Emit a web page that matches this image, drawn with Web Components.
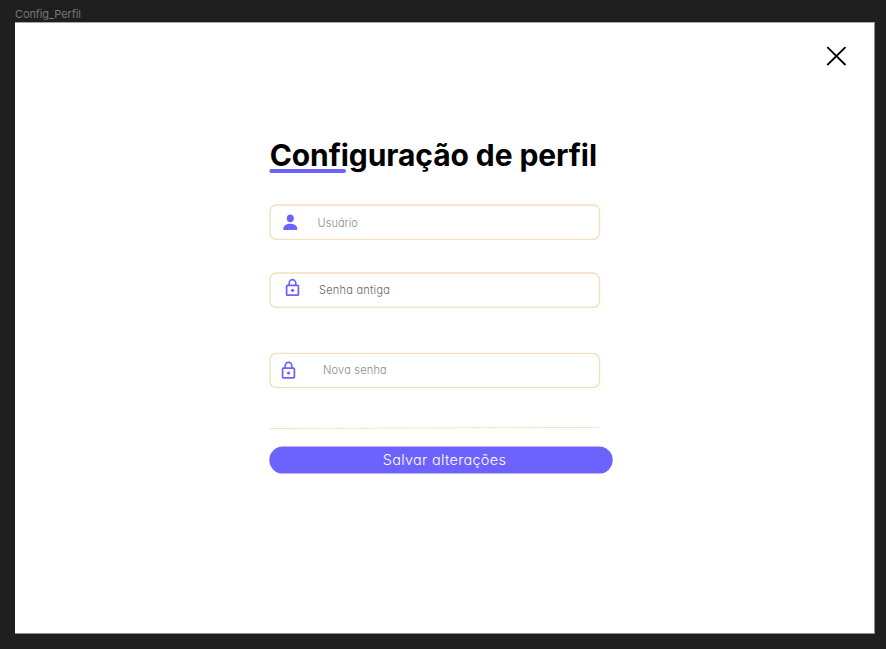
<!DOCTYPE html>
<html lang="pt-BR">
<head>
<meta charset="utf-8">
<title>Config_Perfil</title>
<style>
html,body{margin:0;height:100%;background:#1e1e1e;overflow:hidden}
</style>
</head>
<body>
<profile-frame label="Config_Perfil">
  <close-button slot="action"></close-button>
  <page-title>Configuração de perfil</page-title>
  <text-field icon="user" style="--icon-x:13px;--icon-y:.3px;--text-x:48.6px;--text-y:.5px;--ls:.03px;margin-top:26px">Usuário</text-field>
  <text-field icon="lock" style="--icon-x:14.7px;--icon-y:-2px;--text-x:50px;--ink:#666;--ls:.25px;margin-top:32px">Senha antiga</text-field>
  <text-field icon="lock" style="--icon-x:11.2px;--icon-y:.7px;--text-x:54px;--text-y:-.2px;--ls:.2px;margin-top:44px;--box-y:.3px">Nova senha</text-field>
  <rule-line></rule-line>
  <save-button>Salvar alterações</save-button>
</profile-frame>
<script>
const define = (name, html, setup) => customElements.define(name, class extends HTMLElement {
  constructor() {
    super();
    const t = document.createElement('template');
    t.innerHTML = html;
    this.attachShadow({mode: 'open'}).append(t.content.cloneNode(true));
  }
  connectedCallback() { if (setup) setup(this, this.shadowRoot); }
});

define('profile-frame', `<style>
:host{display:flex;flex-direction:column;box-sizing:border-box;height:649px;padding:0 11px 15.5px 15px;font-family:Inter,"Liberation Sans",sans-serif}
.label{height:22px;box-sizing:border-box;padding-top:7px;font-size:11px;line-height:14px;letter-spacing:-.1px;color:#777}
.canvas{flex:1;box-sizing:border-box;background:#fff;border:solid #8c908f;border-width:.5px 1px 1px 0;border-top-color:#a5a5a5}
header{display:flex;justify-content:flex-end;padding:21px 26px 0 0}
main{display:block;width:344px;margin:67px 0 0 254px}
</style><div class="label"></div><div class="canvas"><header><slot name="action"></slot></header><main><slot></slot></main></div>`,
(el, root) => { root.querySelector('.label').textContent = el.getAttribute('label'); });

define('close-button', `<style>:host{display:block;width:24px;height:24px}svg{display:block}</style>
<svg width="24" height="24" viewBox="0 0 24 24" fill="none" stroke="#000" stroke-width="1.8"><path d="M3.3 3.2 21.5 21M21.5 3.2 3.3 21"/></svg>`);

define('page-title', `<style>
:host{display:block;height:43px}
h1{margin:0;padding-left:.7px;font-size:30px;line-height:41px;height:34px;font-weight:700;color:#000;white-space:nowrap;letter-spacing:-.09px}
svg{display:block}
</style><h1><slot></slot></h1><svg width="78" height="5" viewBox="0 0 78 5"><rect x=".3" y="0" width="76.7" height="4" rx="2" fill="#6c63ff"/></svg>`);

define('text-field', `<style>
:host{display:grid;grid-template:36px/var(--text-x) 1fr;align-items:center;width:332px;height:36px}
.box{grid-area:1/1/2/3;margin:0;transform:translateY(var(--box-y,0))}
.icon{grid-area:1/1;margin-left:var(--icon-x);transform:translateY(var(--icon-y,0))}
svg{display:block}
span{grid-area:1/2;font-size:11px;font-weight:350;line-height:16px;color:var(--ink,#8c8c8c);font-feature-settings:"cv11";letter-spacing:var(--ls);white-space:nowrap;transform:translateY(var(--text-y,0))}
</style><svg class="box" width="332" height="36" viewBox="0 0 332 36"><rect x="1" y="1" width="329.5" height="34.4" rx="6.5" fill="none" stroke="#f3dfbb" stroke-width="1.3"/></svg>
<svg class="icon" width="18" height="20" viewBox="0 0 18 20"></svg><span><slot></slot></span>`,
(el, root) => {
  root.querySelector('.icon').innerHTML = el.getAttribute('icon') === 'user'
    ? '<g fill="#6c63ff"><ellipse cx="8.3" cy="6" rx="3.5" ry="3.9"/><path d="M1.4 17.8v-1.6c0-3 3.2-4.7 6.9-4.7s6.9 1.7 6.9 4.7v1.6z"/></g>'
    : '<g fill="none" stroke="#6c63ff" stroke-width="1.7"><rect x="2.6" y="7.4" width="11.8" height="9.8" rx=".8"/><path d="M5.2 7.4V5.2a3.3 3.5 0 0 1 6.6 0v2.2"/></g><circle cx="8.5" cy="12.3" r="1.6" fill="#6c63ff"/>';
});

define('rule-line', `<style>:host{display:block;margin-top:37px;height:4px;width:331px}svg{display:block}</style>
<svg width="331" height="4" viewBox="0 0 331 4"><path d="M.5 3.5 330.5 2.4" stroke="#f3e2c6" stroke-width="1"/></svg>`);

define('save-button', `<style>
:host{display:block;margin-top:17px}
button{display:grid;grid-template:28px/344px;place-items:center;border:0;padding:0;background:none;color:#fff;font:350 14.5px/26px Inter,sans-serif}
svg,span{grid-area:1/1}
svg{display:block}
span{padding-left:7px;font-feature-settings:"cv11";letter-spacing:.3px}
</style><button><svg width="344" height="28" viewBox="0 0 344 28"><rect x=".3" y=".6" width="343.4" height="27" rx="13.5" fill="#6c63ff"/></svg><span><slot></slot></span></button>`);
</script>
</body>
</html>
